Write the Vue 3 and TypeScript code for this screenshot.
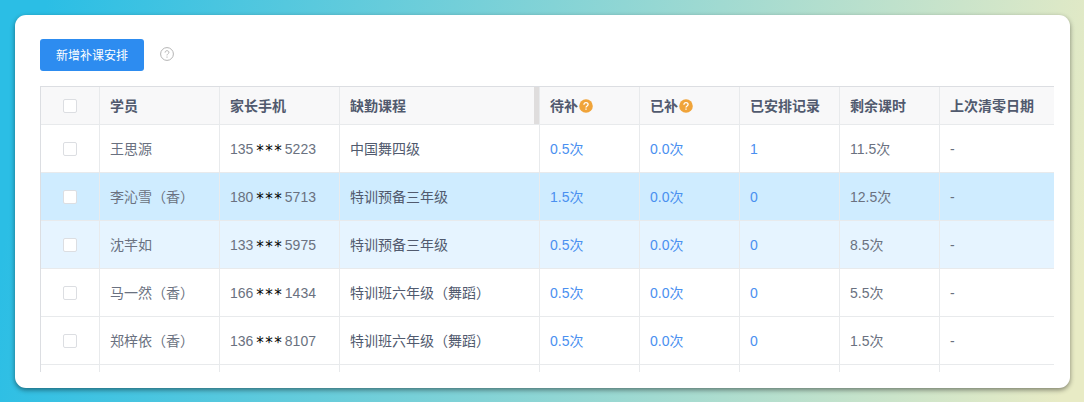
<script setup lang="ts">
import { ref } from 'vue'

interface Row {
  id: number
  name: string
  phoneStart: string
  phoneEnd: string
  course: string
  pending: string
  done: string
  arranged: string
  remaining: string
  cleared: string
  tone?: 'hover' | 'stripe'
}

const rows: Row[] = [
  { id: 1, name: '王思源', phoneStart: '135', phoneEnd: '5223', course: '中国舞四级', pending: '0.5次', done: '0.0次', arranged: '1', remaining: '11.5次', cleared: '-' },
  { id: 2, name: '李沁雪（香）', phoneStart: '180', phoneEnd: '5713', course: '特训预备三年级', pending: '1.5次', done: '0.0次', arranged: '0', remaining: '12.5次', cleared: '-', tone: 'hover' },
  { id: 3, name: '沈芊如', phoneStart: '133', phoneEnd: '5975', course: '特训预备三年级', pending: '0.5次', done: '0.0次', arranged: '0', remaining: '8.5次', cleared: '-', tone: 'stripe' },
  { id: 4, name: '马一然（香）', phoneStart: '166', phoneEnd: '1434', course: '特训班六年级（舞蹈）', pending: '0.5次', done: '0.0次', arranged: '0', remaining: '5.5次', cleared: '-' },
  { id: 5, name: '郑梓依（香）', phoneStart: '136', phoneEnd: '8107', course: '特训班六年级（舞蹈）', pending: '0.5次', done: '0.0次', arranged: '0', remaining: '1.5次', cleared: '-' },
]

const selected = ref<number[]>([])

function toggleAll(event: Event) {
  const checked = (event.target as HTMLInputElement).checked
  selected.value = checked ? rows.map((row) => row.id) : []
}
</script>

<template>
  <main class="page">
    <section class="card">
      <div class="toolbar">
        <button class="primary" type="button">新增补课安排</button>
        <button class="help" type="button" aria-label="帮助">
          <svg viewBox="0 0 14 14" fill="none" stroke="currentColor">
            <circle cx="7" cy="7" r="6.4" />
            <path d="M5.1 5.6C5.1 4.4 5.9 3.7 7 3.7s1.9.7 1.9 1.7c0 1.3-1.9 1.5-1.9 3" />
            <path d="M7 9.5v1.2" />
          </svg>
        </button>
      </div>
      <table>
        <colgroup>
          <col class="w-check" />
          <col class="w-person" />
          <col class="w-person" />
          <col class="w-course" />
          <col class="w-count" />
          <col class="w-count" />
          <col class="w-count" />
          <col class="w-count" />
          <col />
        </colgroup>
        <thead>
          <tr>
            <th class="check">
              <input type="checkbox" aria-label="全选" :checked="selected.length === rows.length" @change="toggleAll" />
            </th>
            <th>学员</th>
            <th>家长手机</th>
            <th class="pinned">缺勤课程</th>
            <th v-for="label in ['待补', '已补']" :key="label">
              <span class="hinted">{{ label }}
                <svg viewBox="0 0 14 14" fill="none" aria-hidden="true">
                  <circle cx="7" cy="7" r="6.8" fill="#f0a43a" />
                  <path d="M4.9 5.7C4.9 4.4 5.8 3.6 7 3.6s2.1.7 2.1 1.9c0 1.4-2.1 1.5-2.1 3M7 9.5v1.3" stroke="#fff" stroke-width="1.3" />
                </svg>
              </span>
            </th>
            <th>已安排记录</th>
            <th>剩余课时</th>
            <th>上次清零日期</th>
          </tr>
        </thead>
        <tbody>
          <tr v-for="row in rows" :key="row.id" :class="row.tone">
            <td class="check">
              <input v-model="selected" type="checkbox" :value="row.id" :aria-label="row.name" />
            </td>
            <td>{{ row.name }}</td>
            <td><span class="phone"><span>{{ row.phoneStart }}</span><span class="mask">***</span><span>{{ row.phoneEnd }}</span></span></td>
            <td class="course">{{ row.course }}</td>
            <td><a href="#">{{ row.pending }}</a></td>
            <td><a href="#">{{ row.done }}</a></td>
            <td><a href="#">{{ row.arranged }}</a></td>
            <td>{{ row.remaining }}</td>
            <td>{{ row.cleared }}</td>
          </tr>
          <tr class="tail" aria-hidden="true">
            <td v-for="n in 9" :key="n"></td>
          </tr>
        </tbody>
      </table>
    </section>
  </main>
</template>

<style>
body {
  margin: 0;
}
</style>

<style scoped>
.page {
  box-sizing: border-box;
  min-height: 100vh;
  padding: 15px 14px 14px 15px;
  background: linear-gradient(100deg, #2bbee5 0%, #2bbee5 4%, #e8ebc5 98%);
  font-family: "Liberation Sans", "Noto Sans CJK SC", sans-serif;
  font-size: 14px;
  color: #6a7180;
}

.card {
  padding: 24px 16px 16px 25px;
  border-radius: 11px;
  background: #fff;
  box-shadow: 0 2px 5px rgba(0, 0, 0, 0.45);
}

.toolbar {
  display: flex;
  align-items: center;
  gap: 16px;
  margin-bottom: 15px;
}

.primary {
  height: 32px;
  padding: 0 16px 2px;
  border: 0;
  border-radius: 3px;
  background: #2d8cf0;
  color: #fff;
  font: 12px "Liberation Sans", "Noto Sans CJK SC", sans-serif;
}

.help {
  display: flex;
  padding: 0 0 2px;
  border: 0;
  background: none;
  color: #b4b4b4;
}

.help svg,
.hinted svg {
  width: 14px;
  height: 14px;
}

table {
  width: 100%;
  table-layout: fixed;
  border-spacing: 0;
  border-top: 1px solid #dcdee2;
  border-left: 1px solid #dcdee2;
}

.w-check {
  width: 59px;
}

.w-person {
  width: 120px;
}

.w-course {
  width: 200px;
}

.w-count {
  width: 100px;
}

th,
td {
  box-sizing: border-box;
  height: 48px;
  padding: 0 10px;
  border-right: 1px solid #e8eaec;
  border-bottom: 1px solid #e8eaec;
  line-height: 20px;
  text-align: left;
  white-space: nowrap;
}

th {
  height: 38px;
  background: #f8f8f9;
  color: #515a6e;
  font-weight: 700;
}

th:last-child,
td:last-child {
  border-right: 0;
}

.pinned {
  box-shadow: inset -5px 0 #dfdddd;
}

.hinted {
  display: flex;
  align-items: center;
  gap: 1px;
}

th.check,
td.check {
  padding: 0;
}

input {
  display: block;
  appearance: none;
  box-sizing: border-box;
  width: 14px;
  height: 14px;
  margin: 0 auto;
  border: 1px solid #dcdee2;
  border-radius: 2px;
  background: #fff;
}

input:checked {
  border-color: #2d8cf0;
  background: #2d8cf0;
}

.course {
  color: #515a6e;
}

.phone {
  display: flex;
  align-items: center;
  justify-content: space-between;
  width: 86px;
  height: 20px;
}

.mask {
  padding-top: 4px;
  color: #000;
  font: 15px/20px "DejaVu Sans Mono", monospace;
}

.hover td {
  background: #cfecff;
}

.stripe td {
  background: #e6f4ff;
}

.tail td {
  height: 7px;
  padding: 0;
  border-bottom: 0;
}

a {
  color: #4a90f0;
  text-decoration: none;
}
</style>
